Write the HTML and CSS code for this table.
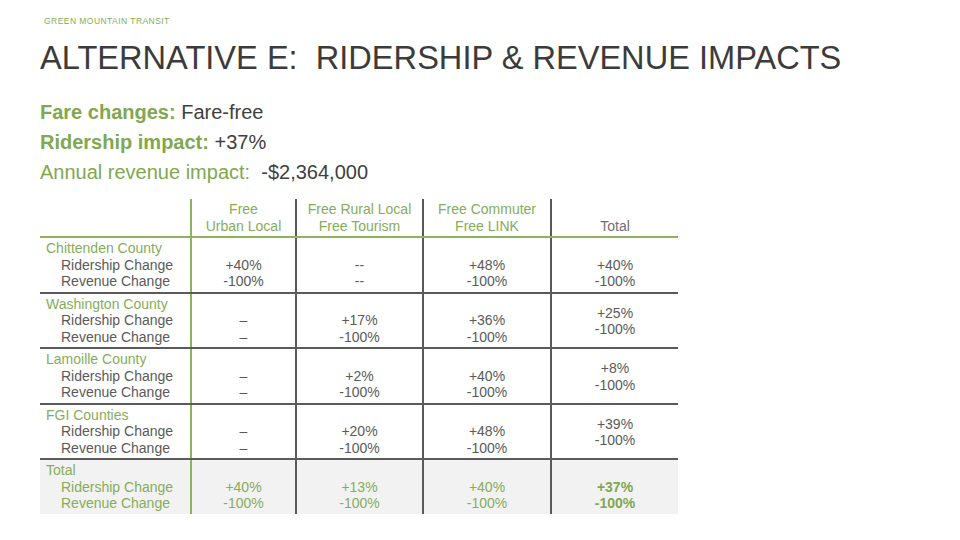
FILE: index.html
```html
<!DOCTYPE html>
<html>
<head>
<meta charset="utf-8">
<link rel="stylesheet" href="styles.css">
</head>
<body>
<div class="slide">
  <div class="brand">GREEN MOUNTAIN TRANSIT</div>
  <h1 class="title">ALTERNATIVE E:&nbsp; RIDERSHIP &amp; REVENUE IMPACTS</h1>
  <div class="summary">
    <div class="line"><span class="key bold">Fare changes:</span> Fare-free</div>
    <div class="line"><span class="key bold">Ridership impact:</span> +37%</div>
    <div class="line"><span class="key">Annual revenue impact:</span>&nbsp; -$2,364,000</div>
  </div>
  <table class="impacts">
    <colgroup>
      <col class="c-label"><col class="c1"><col class="c2"><col class="c3"><col class="c4">
    </colgroup>
    <thead>
      <tr>
        <th class="lab"></th>
        <th class="first">Free<br>Urban Local</th>
        <th>Free Rural Local<br>Free Tourism</th>
        <th>Free Commuter<br>Free LINK</th>
        <th class="tot">Total</th>
      </tr>
    </thead>
    <tbody>
      <tr>
        <td class="lab"><span class="grp">Chittenden County</span><span class="sub">Ridership Change</span><span class="sub">Revenue Change</span></td>
        <td class="first"><span>&nbsp;</span><span>+40%</span><span>-100%</span></td>
        <td><span>&nbsp;</span><span>--</span><span>--</span></td>
        <td><span>&nbsp;</span><span>+48%</span><span>-100%</span></td>
        <td><span>&nbsp;</span><span>+40%</span><span>-100%</span></td>
      </tr>
      <tr>
        <td class="lab"><span class="grp">Washington County</span><span class="sub">Ridership Change</span><span class="sub">Revenue Change</span></td>
        <td class="first"><span>&nbsp;</span><span>–</span><span>–</span></td>
        <td><span>&nbsp;</span><span>+17%</span><span>-100%</span></td>
        <td><span>&nbsp;</span><span>+36%</span><span>-100%</span></td>
        <td class="mid"><span>+25%</span><span>-100%</span></td>
      </tr>
      <tr>
        <td class="lab"><span class="grp">Lamoille County</span><span class="sub">Ridership Change</span><span class="sub">Revenue Change</span></td>
        <td class="first"><span>&nbsp;</span><span>–</span><span>–</span></td>
        <td><span>&nbsp;</span><span>+2%</span><span>-100%</span></td>
        <td><span>&nbsp;</span><span>+40%</span><span>-100%</span></td>
        <td class="mid"><span>+8%</span><span>-100%</span></td>
      </tr>
      <tr>
        <td class="lab"><span class="grp">FGI Counties</span><span class="sub">Ridership Change</span><span class="sub">Revenue Change</span></td>
        <td class="first"><span>&nbsp;</span><span>–</span><span>–</span></td>
        <td><span>&nbsp;</span><span>+20%</span><span>-100%</span></td>
        <td><span>&nbsp;</span><span>+48%</span><span>-100%</span></td>
        <td class="mid"><span>+39%</span><span>-100%</span></td>
      </tr>
      <tr class="total">
        <td class="lab"><span class="grp">Total</span><span class="sub">Ridership Change</span><span class="sub">Revenue Change</span></td>
        <td class="first"><span>&nbsp;</span><span>+40%</span><span>-100%</span></td>
        <td><span>&nbsp;</span><span>+13%</span><span>-100%</span></td>
        <td><span>&nbsp;</span><span>+40%</span><span>-100%</span></td>
        <td class="strong"><span>&nbsp;</span><span>+37%</span><span>-100%</span></td>
      </tr>
    </tbody>
  </table>
</div>
</body>
</html>
```

FILE: styles.css
```css
html, body {
  margin: 0;
  padding: 0;
  background: #ffffff;
}
body {
  font-family: "Liberation Sans", Arial, sans-serif;
  color: #595959;
}
.slide {
  width: 960px;
  height: 540px;
  box-sizing: border-box;
  padding: 16px 0 0 40px;
  overflow: hidden;
}
.brand {
  margin-left: 4px;
  font-size: 8.5px;
  letter-spacing: 0.45px;
  color: #86ad58;
  line-height: 11px;
}
.title {
  margin: 12px 0 0 0;
  font-weight: normal;
  font-size: 32.6px;
  line-height: 38px;
  color: #3b3b3b;
  letter-spacing: 0;
}
.summary {
  margin-top: 20px;
  font-size: 20px;
  line-height: 30px;
  color: #404040;
}
.key {
  color: #7fa84f;
}
.bold {
  font-weight: bold;
}
.impacts {
  margin-top: 12px;
  border-collapse: collapse;
  font-size: 14px;
  line-height: 16.5px;
  table-layout: fixed;
  width: 638px;
}
.c-label { width: 151px; }
.c1 { width: 105px; }
.c2 { width: 127px; }
.c3 { width: 128px; }
.c4 { width: 127px; }

.impacts th {
  font-weight: normal;
  color: #86ad58;
  text-align: center;
  vertical-align: bottom;
  padding: 2px 0 2px 0;
  height: 31px;
  border-bottom: 2px solid #8db35e;
  border-left: 2px solid #5a5a5a;
}
.impacts th.tot {
  color: #6f6f6f;
}
.impacts th.lab {
  border-left: none;
}
.impacts .first {
  border-left: 2px solid #8db35e;
}
.impacts td {
  text-align: center;
  vertical-align: top;
  padding: 2px 0 2px 0;
  border-left: 2px solid #5a5a5a;
  border-bottom: 2px solid #5a5a5a;
  color: #5a5a5a;
}
.impacts td.first {
  border-left: 2px solid #8db35e;
}
.impacts td span {
  display: block;
}
.impacts td.lab {
  text-align: left;
  border-left: none;
  padding-left: 6px;
}
.grp {
  color: #86ad58;
}
.sub {
  padding-left: 15px;
}
.impacts td.mid {
  vertical-align: middle;
  padding: 3px 0 1px 0;
}
.total td {
  background: #f2f2f2;
  border-bottom: none;
  color: #86ad58;
}
.total .sub {
  color: #86ad58;
}
.total td.strong {
  font-weight: bold;
  color: #7fa84f;
}
```
